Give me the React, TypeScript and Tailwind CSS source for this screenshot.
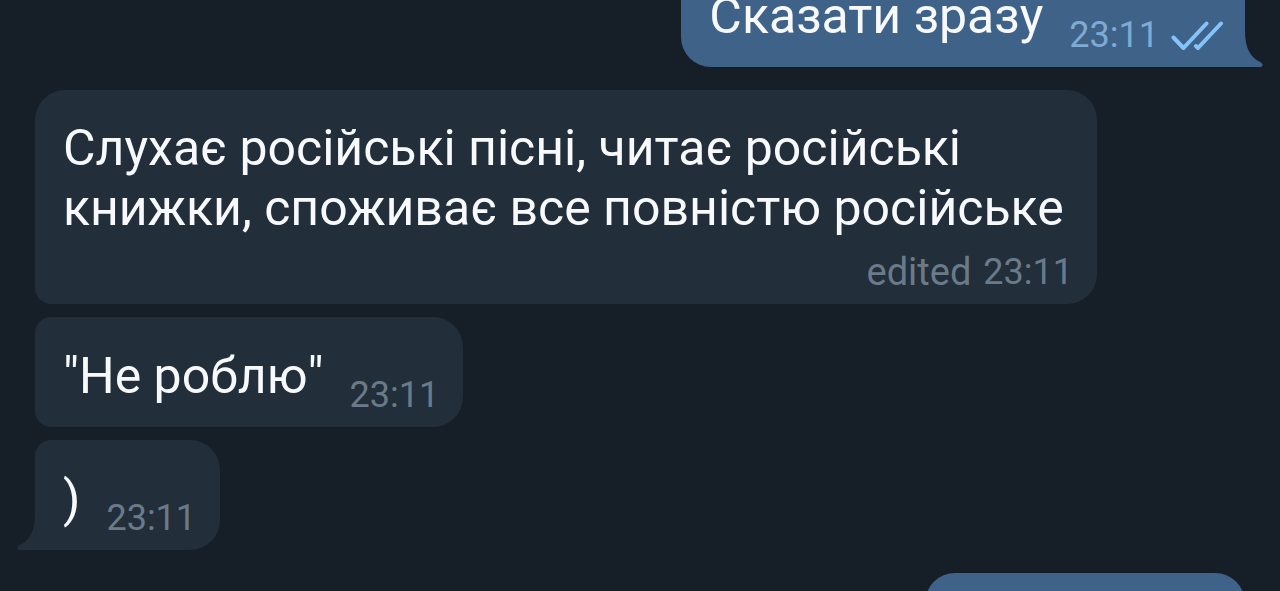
import type { ReactNode } from "react";
import clsx from "clsx";

type BubbleProps = {
  outgoing?: boolean;
  stacked?: boolean;
  tail?: boolean;
  corners: string;
  meta: ReactNode;
  children: ReactNode;
};

function Tail({ outgoing }: { outgoing?: boolean }) {
  return (
    <svg
      aria-hidden="true"
      viewBox="0 0 20 36"
      className={clsx(
        "absolute bottom-0 h-9 w-5",
        outgoing ? "-right-[18px] -scale-x-100 text-[#3f6289]" : "-left-[18px] text-[#222e3a]",
      )}
    >
      <path
        fill="currentColor"
        d="M18 0C18 18 12 27 2 31.5C0 32.5 -.2 36 3 36H20V0Z"
      />
    </svg>
  );
}

function Checks() {
  return (
    <svg
      role="img"
      aria-label="Read"
      viewBox="0 0 54 32"
      className="mb-1 h-8 w-[54px]"
      fill="none"
      stroke="#86c3fb"
      strokeWidth="4"
      strokeLinecap="round"
      strokeLinejoin="round"
    >
      <path d="M2.500 16.500L12.500 27L35.500 2.500" />
      <path d="M25 25L27 27L50 2.500" />
    </svg>
  );
}

function Bubble({ outgoing, stacked, tail, corners, meta, children }: BubbleProps) {
  return (
    <article
      className={clsx(
        "relative flex max-w-[1062px] shrink-0 pb-[10px] pl-7",
        corners,
        stacked ? "flex-col gap-3 pt-7" : "items-end gap-[26px] pt-[29px]",
        outgoing ? "self-end bg-[#3f6289] pr-5" : "self-start bg-[#222e3a] pr-6",
      )}
    >
      {tail && <Tail outgoing={outgoing} />}
      <p
        className={clsx(
          "text-[50px] leading-[60px] text-[#f7f9fc]",
          !stacked && "pb-[11px]",
        )}
      >
        {children}
      </p>
      <div
        className={clsx(
          "flex items-end gap-3 self-end text-[36px] leading-[44px]",
          outgoing ? "text-[#7eaad3]" : "text-[#6b7a89]",
        )}
      >
        {meta}
      </div>
    </article>
  );
}

export default function App() {
  return (
    <main className="flex h-screen flex-col overflow-hidden bg-[#161e27] px-[35px] font-['Roboto',sans-serif]">
      <section className="-mt-[43px] flex shrink-0 flex-col">
        <Bubble
          outgoing
          tail
          corners="rounded-t-[30px] rounded-bl-[30px]"
          meta={
            <>
              <time>23:11</time>
              <Checks />
            </>
          }
        >
          Сказати зразу
        </Bubble>
      </section>

      <section className="mt-[23px] flex shrink-0 flex-col gap-[13px]">
        <Bubble
          stacked
          corners="rounded-[30px] rounded-bl-2xl"
          meta={
            <>
              <span className="text-[38px]">edited</span>
              <time>23:11</time>
            </>
          }
        >
          Слухає російські пісні, читає російські книжки, споживає все повністю російське
        </Bubble>
        <Bubble corners="rounded-l-2xl rounded-r-[30px]" meta={<time>23:11</time>}>
          "Не роблю"
        </Bubble>
        <Bubble tail corners="rounded-tl-2xl rounded-r-[30px]" meta={<time>23:11</time>}>
          )
        </Bubble>
      </section>

      <section className="mt-[23px] flex shrink-0 flex-col">
        <div className="h-[110px] w-1/4 min-w-[320px] self-end rounded-[30px] bg-[#3f6289]" />
      </section>
    </main>
  );
}
